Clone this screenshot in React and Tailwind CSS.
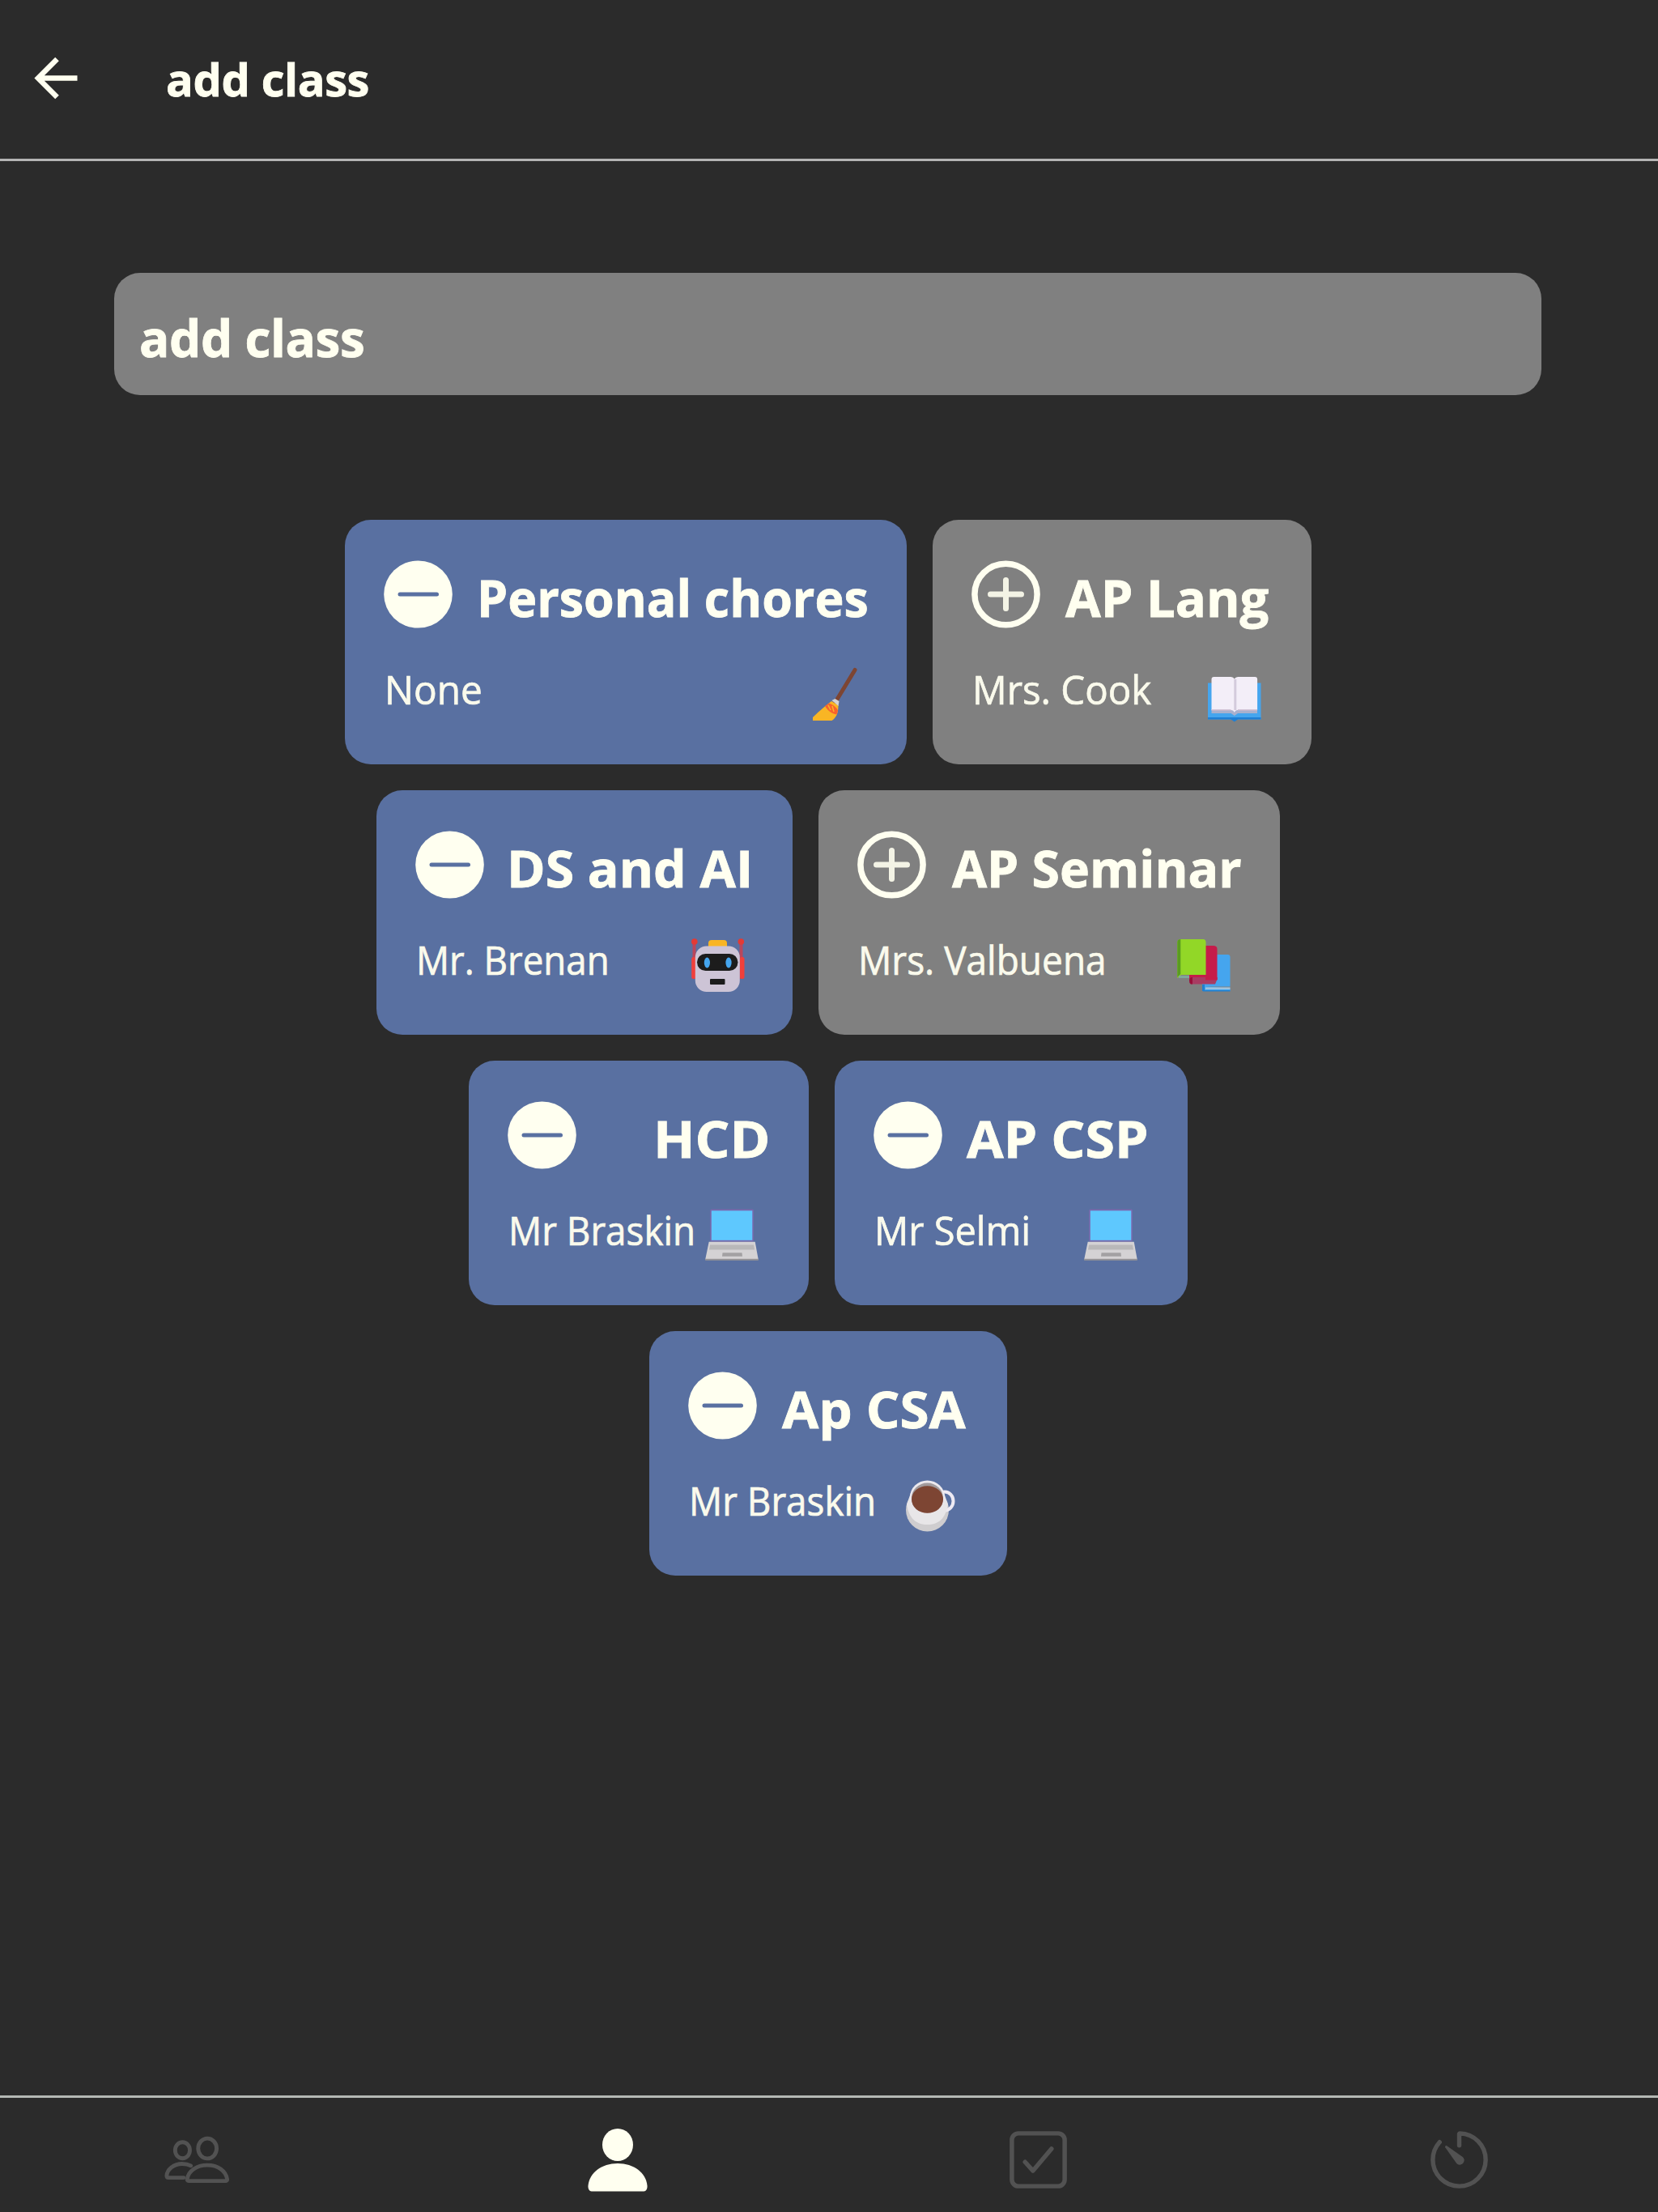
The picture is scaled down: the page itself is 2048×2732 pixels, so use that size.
import React from 'react';
import { IoCheckboxOutline, IoTimerOutline } from 'react-icons/io5';

const BackArrow = () => (
  <svg width="54" height="54" viewBox="0 0 54 54" fill="none" stroke="#fffff0" strokeWidth="6.500">
    <path d="M53.500 26.500H6M28.500 3L5 26.500 28.500 50" />
  </svg>
);

const MinusCircle = () => (
  <svg className="shrink-0" width="85" height="84" viewBox="0 0 85 84">
    <ellipse cx="42.5" cy="42" rx="42.3" ry="41.6" fill="#fffff0" />
    <path d="M20 42h45.500" stroke="#5970a1" strokeWidth="5" strokeLinecap="round" />
  </svg>
);

const PlusCircle = () => (
  <svg className="shrink-0" width="85" height="84" viewBox="0 0 85 84" fill="none" stroke="#fffff0" strokeLinecap="round">
    <ellipse cx="42.5" cy="42" rx="38.6" ry="37.8" strokeWidth="7.500" />
    <path d="M23.500 42h38M42.500 24.500v35" strokeWidth="7" strokeOpacity="0.9" />
  </svg>
);

const Broom = () => (
  <svg className="overflow-visible" width="68" height="68" viewBox="0 0 68 68">
    <path d="M64 3.500L40 43" stroke="#7d4533" strokeWidth="5" strokeLinecap="round" />
    <path d="M35 42l8.500 5c0 9-2 15-8 19H12v-4c7-7 14-13 23-20z" fill="#f9b524" />
    <path d="M35.500 41l4-2 5 3-1 6z" fill="#d3d3d3" />
    <path d="M27 48l5-3.500c5 2 10 5.500 11 9l-1.500 5c-6-1-11.500-5-14.500-10.500z" fill="#f8622d" />
    <path d="M31 47l3 6M36 48l2 7" stroke="#f9b524" strokeWidth="1.500" />
  </svg>
);

const OpenBook = () => (
  <svg className="overflow-visible" width="68" height="68" viewBox="0 0 68 68">
    <path d="M0 19.500h65.500v45H0z" fill="#45a5ee" />
    <path d="M0 62h65.500v2.500H37l-4.200 3-4.200-3H0z" fill="#1f7fd4" />
    <path d="M4.500 52h56.500v5H37l-4.200 3-4.200-3H4.500z" fill="#a9b0cd" />
    <path d="M4.500 15q0-3 3-3h21q3 0 4.300 2.500 1.300-2.500 4.300-2.500h21q3 0 3 3V53H37q-3 0-4.200 3-1.200-3-4.300-3h-24z" fill="#f3eef8" />
    <path d="M4.500 53h24M37 53h24" stroke="#c9b8cc" strokeWidth="1.500" />
    <path d="M33.800 15v38" stroke="#d3cbdc" strokeWidth="3" />
  </svg>
);

const Robot = () => (
  <svg className="overflow-visible" width="68" height="68" viewBox="0 0 68 68">
    <path d="M6.500 5v46M64.500 5v46" stroke="#b9475c" strokeWidth="4" />
    <rect x="3.200" y="24" width="5" height="27" rx="2.500" fill="#f0403b" />
    <rect x="63" y="24" width="5.500" height="27" rx="2.500" fill="#f0403b" />
    <circle cx="6.800" cy="5" r="3.800" fill="#e33a35" />
    <circle cx="64.300" cy="5" r="3.800" fill="#e33a35" />
    <path d="M24 11V7q0-4 4-4h15q4 0 4 4v4z" fill="#f9b524" />
    <rect x="7.800" y="10.500" width="55" height="56.500" rx="14" fill="#cdc4d6" />
    <rect x="10" y="20" width="50.500" height="21" rx="10.500" fill="#1c1c1c" />
    <ellipse cx="22.400" cy="31" rx="3.600" ry="6.500" fill="#45a5ee" />
    <ellipse cx="49" cy="31" rx="3.600" ry="6.500" fill="#45a5ee" />
    <rect x="26" y="51" width="18.500" height="7" rx="1" fill="#1c1c1c" />
  </svg>
);

const Books = () => (
  <svg className="overflow-visible" width="68" height="68" viewBox="0 0 68 68">
    <path d="M32 24q0-3 3-3h28.500q3 0 3 3v36.500H36l30.500 2v3.500H32z" fill="#45a5ee" />
    <path d="M32 58h3v8h-3z" fill="#2280cf" />
    <path d="M36 62.700h30.500" stroke="#9fc3df" strokeWidth="2.500" />
    <path d="M33 65.700h33.500" stroke="#2280cf" strokeWidth="1.500" />
    <path d="M16 14q0-4 4-4h25.500q5 0 5 4v38H20q-4 0-4 4z" fill="#c51c4a" />
    <path d="M16 53q0-4 4-4h30.500v2.500L48 57.500H18q-2-1-2-4.500z" fill="#a83c62" />
    <path d="M36 49h14.500v3.500H36z" fill="#c51c4a" />
    <path d="M16 53q0-4 4-4v8.500h-2q-2-1-2-4.500z" fill="#99103a" />
    <path d="M1.300 6q0-4 4-4H33q3.500 0 3.500 4V46H6l-4.700 4z" fill="#92d727" />
    <path d="M1.300 6q0-4 4-4V45l-4 4z" fill="#5a9c20" />
    <path d="M3 48.500h13" stroke="#7fa69a" strokeWidth="3" />
  </svg>
);

const Laptop = () => (
  <svg className="overflow-visible" width="68" height="68" viewBox="0 0 68 68">
    <rect x="6.300" y="1.500" width="53.500" height="40" rx="1.500" fill="#7b68ae" />
    <rect x="7.800" y="3.300" width="50.500" height="36.500" fill="#5ec8fe" />
    <path d="M4.700 41.800h57L65.700 63.500H.2z" fill="#d4d2d4" />
    <path d="M6 45.500h54l1 6H5z" fill="#b9b8b9" />
    <path d="M.2 62.800h65.500v2H.2z" fill="#969496" />
    <path d="M21.500 55.300h24l.5 4.500h-25z" fill="#a3a1a3" />
  </svg>
);

const Coffee = () => (
  <svg className="overflow-visible" width="68" height="68" viewBox="0 0 68 68">
    <circle cx="29.500" cy="39" r="26.500" fill="#cfcdcf" />
    <ellipse cx="51" cy="28" rx="10.500" ry="11.500" fill="none" stroke="#eeeaf3" strokeWidth="4" />
    <path d="M4 32c3 18 12 25 25.500 25S52 50 55 32L50 18H9z" fill="#e8e6e8" />
    <ellipse cx="29.500" cy="23" rx="21.500" ry="20.500" fill="#ece9ee" />
    <ellipse cx="29.500" cy="24" rx="19.500" ry="18.500" fill="#a19a9c" />
    <ellipse cx="29.500" cy="26" rx="19.500" ry="16.800" fill="#7d4533" />
  </svg>
);

const Friends = () => (
  <svg className="mr-[2px] mb-[2px]" width="82" height="61" viewBox="0 0 84 62" fill="none" stroke="#525252" strokeWidth="5" strokeLinecap="round" strokeLinejoin="round">
    <ellipse cx="24" cy="20" rx="9.300" ry="10.200" />
    <ellipse cx="55.500" cy="17.700" rx="11.700" ry="12.700" />
    <path d="M34.500 39.500c-3-1.600-7-2.300-11-2.300-10.500 0-19 7-19.500 15 0 1.800 1 2.500 2.500 2.500h19" />
    <path d="M31.500 58.800c-1 0-1.700-1-1.500-2.300 1.200-10.500 12-17.700 25.500-17.700S78.800 46 80.500 56.500c.2 1.300-.5 2.300-1.500 2.300z" />
  </svg>
);

const Person = () => (
  <svg width="74" height="80" viewBox="0 0 74 80" fill="#fffff0">
    <ellipse cx="37" cy="21" rx="19" ry="20" />
    <path d="M.5 71.500C2 55.500 17 44 37 44s35 11.500 36.500 27.500c.2 4.500-1.500 7-5.500 7H6c-4 0-5.700-2.500-5.500-7z" />
  </svg>
);

const rows = [
  [
    { name: 'Personal chores', teacher: 'None', added: true, emoji: Broom, card: 'w-[694px]', title: 'ml-[30px] scale-x-[0.966]', sub: 'scale-x-[0.955]' },
    { name: 'AP Lang', teacher: 'Mrs. Cook', added: false, emoji: OpenBook, card: 'w-[468px]', title: 'ml-[31px] scale-x-[1.005]', sub: 'scale-x-[0.948]' },
  ],
  [
    { name: 'DS and AI', teacher: 'Mr. Brenan', added: true, emoji: Robot, card: 'w-[514px]', title: 'ml-[28px] scale-x-[1.022]', sub: 'scale-x-[0.913]' },
    { name: 'AP Seminar', teacher: 'Mrs. Valbuena', added: false, emoji: Books, card: 'w-[570px]', title: 'ml-[32px] scale-x-[0.992]', sub: 'scale-x-[0.92]' },
  ],
  [
    { name: 'HCD', teacher: 'Mr Braskin', added: true, emoji: Laptop, card: 'w-[420px]', title: 'ml-[95px] scale-x-[1.07]', sub: 'scale-x-[0.916]' },
    { name: 'AP CSP', teacher: 'Mr Selmi', added: true, emoji: Laptop, card: 'w-[436px]', title: 'ml-[30px] scale-x-[1.05]', sub: 'scale-x-[0.94]' },
  ],
  [
    { name: 'Ap CSA', teacher: 'Mr Braskin', added: true, emoji: Coffee, card: 'w-[442px]', title: 'ml-[31px] scale-x-[1.04]', sub: 'scale-x-[0.916]' },
  ],
];

const ClassCard = ({ item }) => {
  const Emoji = item.emoji;
  return (
    <div
      className={`${item.card} ${
        item.added ? 'bg-[#5970a1]' : 'bg-[#808080]'
      } h-[302px] shrink-0 rounded-[32px] pt-[50px] pl-12`}
    >
      <div className="flex h-[84px] items-center">
        {item.added ? <MinusCircle /> : <PlusCircle />}
        <h2
          className={`${item.title} w-0 origin-left pt-[7px] text-[63px] leading-[80px] font-bold whitespace-nowrap [-webkit-text-stroke:0.8px_#fffff0]`}
        >
          {item.name}
        </h2>
      </div>
      <div className="mt-12 flex items-start justify-between pr-[60px]">
        <p
          className={`${item.sub} ml-px w-0 origin-left text-[50px] leading-[54px] whitespace-nowrap text-[#fafaec] [-webkit-text-stroke:0.7px_#fafaec]`}
        >
          {item.teacher}
        </p>
        <div className="w-[68px] shrink-0">
          <Emoji />
        </div>
      </div>
    </div>
  );
};

export default function App() {
  return (
    <div className="flex h-[2732px] w-[2048px] flex-col overflow-hidden bg-[#2b2b2b] font-['Open_Sans','Noto_Sans',sans-serif] text-[#fffff0]">
      <header className="flex h-[199px] items-center border-b-[3px] border-[#b4b4b4] pb-[3px] pl-[42px]">
        <BackArrow />
        <h1 className="ml-[109px] text-[56px] leading-[80px] font-bold tracking-[-0.4px] [-webkit-text-stroke:0.8px_#fffff0]">
          add class
        </h1>
      </header>

      <main className="flex grow flex-col items-center pt-[138px] pr-[3px]">
        <div className="flex h-[151px] w-[1763px] items-center rounded-[32px] bg-[#808080] pt-[8px] pl-[31px]">
          <span className="text-[62px] leading-[80px] font-bold tracking-[-0.4px] [-webkit-text-stroke:0.8px_#fffff0]">
            add class
          </span>
        </div>
        <div className="mt-[154px] flex flex-col items-center gap-8">
          {rows.map((row, i) => (
            <div key={i} className="flex gap-8">
              {row.map((item) => (
                <ClassCard key={item.name} item={item} />
              ))}
            </div>
          ))}
        </div>
      </main>

      <nav className="-ml-4 flex h-[144px] w-[2078px] shrink-0 items-center border-t-[3px] border-[#b4b8b4] pt-[12px] text-[#525252]">
        <div className="flex flex-1 justify-center">
          <Friends />
        </div>
        <div className="flex flex-1 justify-center">
          <Person />
        </div>
        <div className="flex flex-1 justify-center">
          <IoCheckboxOutline className="size-[87px]" />
        </div>
        <div className="flex flex-1 justify-center">
          <IoTimerOutline className="size-[87px]" />
        </div>
      </nav>
    </div>
  );
}
